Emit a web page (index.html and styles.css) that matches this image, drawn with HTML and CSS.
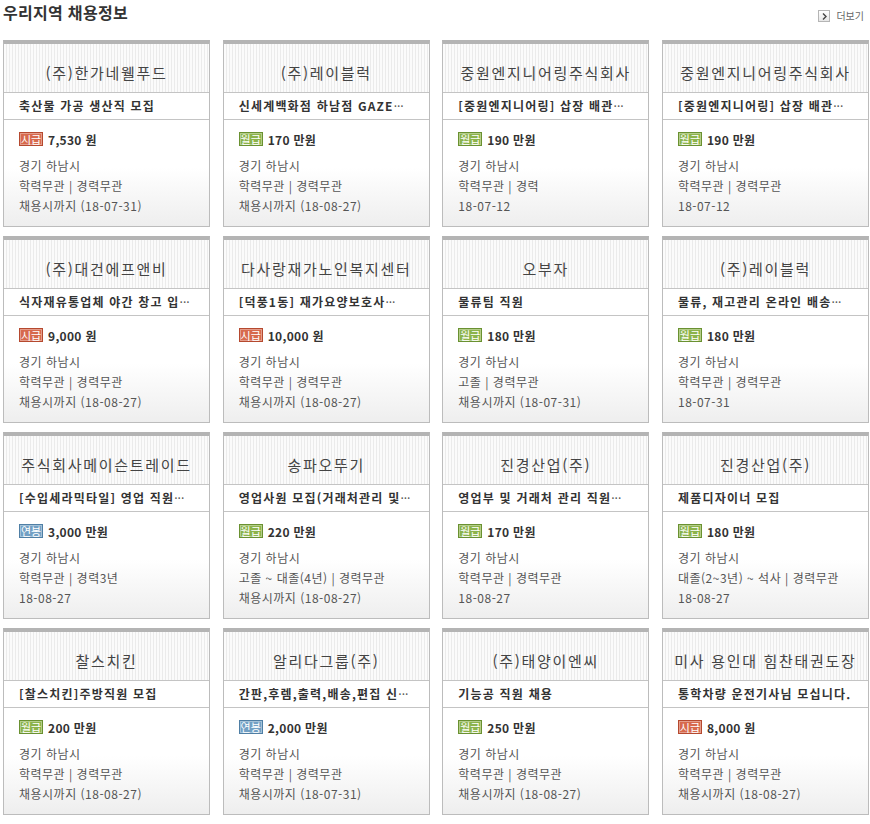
FILE: index.html
```html
<!DOCTYPE html>
<html lang="ko">
<head>
<meta charset="utf-8">
<title>우리지역 채용정보</title>
<link rel="stylesheet" href="styles.css">
</head>
<body>
<div class="wrap">
  <div class="head">
    <h2 class="title">우리지역 채용정보</h2>
    <a class="more" href="#"><span class="more-ico"><svg width="5" height="7" viewBox="0 0 5 7"><path d="M1 0.5 L4 3.5 L1 6.5" fill="none" stroke="#444" stroke-width="1.4"/></svg></span>더보기</a>
  </div>
  <ul class="grid">
    <li class="card"><div class="co">(주)한가네웰푸드</div><div class="job">축산물 가공 생산직 모집</div><div class="body"><div class="pay"><span class="badge red">시급</span>7,530 원</div><div class="info">경기 하남시</div><div class="info">학력무관 | 경력무관</div><div class="info">채용시까지 (18-07-31)</div></div></li>
    <li class="card"><div class="co">(주)레이블럭</div><div class="job">신세계백화점 하남점 GAZE<span class="ell">···</span></div><div class="body"><div class="pay"><span class="badge green">월급</span>170 만원</div><div class="info">경기 하남시</div><div class="info">학력무관 | 경력무관</div><div class="info">채용시까지 (18-08-27)</div></div></li>
    <li class="card"><div class="co">중원엔지니어링주식회사</div><div class="job">[중원엔지니어링] 삽장 배관<span class="ell">···</span></div><div class="body"><div class="pay"><span class="badge green">월급</span>190 만원</div><div class="info">경기 하남시</div><div class="info">학력무관 | 경력</div><div class="info">18-07-12</div></div></li>
    <li class="card"><div class="co">중원엔지니어링주식회사</div><div class="job">[중원엔지니어링] 삽장 배관<span class="ell">···</span></div><div class="body"><div class="pay"><span class="badge green">월급</span>190 만원</div><div class="info">경기 하남시</div><div class="info">학력무관 | 경력무관</div><div class="info">18-07-12</div></div></li>

    <li class="card"><div class="co">(주)대건에프앤비</div><div class="job">식자재유통업체 야간 창고 입<span class="ell">···</span></div><div class="body"><div class="pay"><span class="badge red">시급</span>9,000 원</div><div class="info">경기 하남시</div><div class="info">학력무관 | 경력무관</div><div class="info">채용시까지 (18-08-27)</div></div></li>
    <li class="card"><div class="co">다사랑재가노인복지센터</div><div class="job">[덕풍1동] 재가요양보호사<span class="ell">···</span></div><div class="body"><div class="pay"><span class="badge red">시급</span>10,000 원</div><div class="info">경기 하남시</div><div class="info">학력무관 | 경력무관</div><div class="info">채용시까지 (18-08-27)</div></div></li>
    <li class="card"><div class="co">오부자</div><div class="job">물류팀 직원</div><div class="body"><div class="pay"><span class="badge green">월급</span>180 만원</div><div class="info">경기 하남시</div><div class="info">고졸 | 경력무관</div><div class="info">채용시까지 (18-07-31)</div></div></li>
    <li class="card"><div class="co">(주)레이블럭</div><div class="job">물류, 재고관리 온라인 배송<span class="ell">···</span></div><div class="body"><div class="pay"><span class="badge green">월급</span>180 만원</div><div class="info">경기 하남시</div><div class="info">학력무관 | 경력무관</div><div class="info">18-07-31</div></div></li>

    <li class="card"><div class="co">주식회사메이슨트레이드</div><div class="job">[수입세라믹타일] 영업 직원<span class="ell">···</span></div><div class="body"><div class="pay"><span class="badge blue">연봉</span>3,000 만원</div><div class="info">경기 하남시</div><div class="info">학력무관 | 경력3년</div><div class="info">18-08-27</div></div></li>
    <li class="card"><div class="co">송파오뚜기</div><div class="job">영업사원 모집(거래처관리 및<span class="ell">···</span></div><div class="body"><div class="pay"><span class="badge green">월급</span>220 만원</div><div class="info">경기 하남시</div><div class="info">고졸 ~ 대졸(4년) | 경력무관</div><div class="info">채용시까지 (18-08-27)</div></div></li>
    <li class="card"><div class="co">진경산업(주)</div><div class="job">영업부 및 거래처 관리 직원<span class="ell">···</span></div><div class="body"><div class="pay"><span class="badge green">월급</span>170 만원</div><div class="info">경기 하남시</div><div class="info">학력무관 | 경력무관</div><div class="info">18-08-27</div></div></li>
    <li class="card"><div class="co">진경산업(주)</div><div class="job">제품디자이너 모집</div><div class="body"><div class="pay"><span class="badge green">월급</span>180 만원</div><div class="info">경기 하남시</div><div class="info">대졸(2~3년) ~ 석사 | 경력무관</div><div class="info">18-08-27</div></div></li>

    <li class="card"><div class="co">찰스치킨</div><div class="job">[찰스치킨]주방직원 모집</div><div class="body"><div class="pay"><span class="badge green">월급</span>200 만원</div><div class="info">경기 하남시</div><div class="info">학력무관 | 경력무관</div><div class="info">채용시까지 (18-08-27)</div></div></li>
    <li class="card"><div class="co">알리다그룹(주)</div><div class="job">간판,후렘,출력,배송,편집 신<span class="ell">···</span></div><div class="body"><div class="pay"><span class="badge blue">연봉</span>2,000 만원</div><div class="info">경기 하남시</div><div class="info">학력무관 | 경력무관</div><div class="info">채용시까지 (18-07-31)</div></div></li>
    <li class="card"><div class="co">(주)태양이엔씨</div><div class="job">기능공 직원 채용</div><div class="body"><div class="pay"><span class="badge green">월급</span>250 만원</div><div class="info">경기 하남시</div><div class="info">학력무관 | 경력무관</div><div class="info">채용시까지 (18-08-27)</div></div></li>
    <li class="card"><div class="co">미사 용인대 힘찬태권도장</div><div class="job">통학차량 운전기사님 모십니다.</div><div class="body"><div class="pay"><span class="badge red">시급</span>8,000 원</div><div class="info">경기 하남시</div><div class="info">학력무관 | 경력무관</div><div class="info">채용시까지 (18-08-27)</div></div></li>
  </ul>
</div>
</body>
</html>
```

FILE: styles.css
```css
html, body {
  margin: 0;
  padding: 0;
  background: #fff;
}
body {
  font-family: "Noto Sans CJK KR", "Noto Sans", sans-serif;
  color: #555;
  font-size: 12px;
}
.wrap {
  width: 866px;
  padding-left: 3px;
}
.head {
  height: 40px;
  display: flex;
  justify-content: space-between;
  align-items: flex-start;
}
.title {
  margin: 0;
  font-size: 16px;
  line-height: 24px;
  font-weight: 700;
  letter-spacing: 0.3px;
  color: #333;
}
.more {
  display: flex;
  align-items: center;
  gap: 6px;
  margin-top: 10px;
  margin-right: 5px;
  font-size: 10px;
  line-height: 12px;
  color: #666;
  text-decoration: none;
}
.more-ico {
  width: 10px;
  height: 10px;
  border: 1px solid #b5b5b5;
  background: linear-gradient(#ffffff, #e6e6e6);
  display: flex;
  align-items: center;
  justify-content: center;
}
.grid {
  list-style: none;
  margin: 0;
  padding: 0;
  display: grid;
  grid-template-columns: repeat(4, 207px);
  justify-content: space-between;
  row-gap: 9px;
}
.card {
  box-sizing: border-box;
  height: 187px;
  border: 1px solid #bcbcbc;
  border-top: 4px solid #b4b4b4;
  display: flex;
  flex-direction: column;
}
.co {
  height: 49px;
  box-sizing: border-box;
  padding-top: 8px;
  line-height: 41px;
  border-bottom: 1px solid #c4c4c4;
  background: repeating-linear-gradient(90deg, #fbfbfb 0 2px, #ebebeb 2px 3px);
  text-align: center;
  font-size: 15px;
  letter-spacing: 1.7px;
  color: #444;
  white-space: nowrap;
}
.job {
  height: 26px;
  line-height: 26px;
  padding-left: 15px;
  border-bottom: 1px solid #c4c4c4;
  font-weight: 700;
  color: #333;
  white-space: nowrap;
  overflow: hidden;
  letter-spacing: 1.2px;
}
.ell {
  letter-spacing: 0;
  font-weight: 400;
  color: #555;
}
.body {
  flex: 1;
  padding: 9px 0 0 15px;
  background: linear-gradient(#ffffff 45%, #eeeeee);
}
.pay {
  display: flex;
  align-items: center;
  height: 20px;
  font-weight: 700;
  color: #333;
  margin-bottom: 7px;
  letter-spacing: 0.3px;
}
.badge {
  display: inline-block;
  box-sizing: border-box;
  width: 24px;
  height: 14px;
  line-height: 12px;
  margin-right: 5px;
  font-size: 11px;
  font-weight: 400;
  text-align: center;
  letter-spacing: 0;
  color: #fff;
  box-shadow: inset 0 0 0 1px rgba(255, 255, 255, 0.35);
}
.badge.red {
  background: #d7694d;
  border: 1px solid #b5492f;
}
.badge.green {
  background: #8cb34b;
  border: 1px solid #6a9131;
}
.badge.blue {
  background: #72a0c4;
  border: 1px solid #4f7fa5;
}
.info {
  line-height: 20px;
  white-space: nowrap;
  letter-spacing: 0.5px;
}
```
